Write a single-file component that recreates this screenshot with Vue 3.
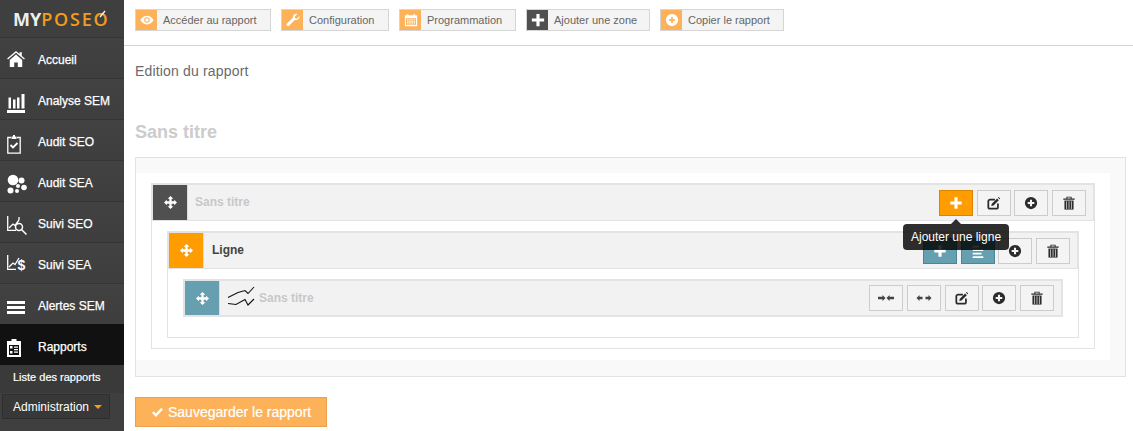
<script setup>
const move = '<path d="M8 0l3.500 3.500H9.400v3.100h3.100V4.500L16 8l-3.500 3.500V9.400H9.400v3.100h2.100L8 16l-3.500-3.500h2.100V9.400H3.500v2.100L0 8l3.500-3.500v2.100h3.100V3.500H4.500z" fill="#fff"/>'
const plus = '<path d="M6.200 1.500h3.600v4.700h4.700v3.600H9.800v4.700H6.200V9.800H1.500V6.200h4.700z" fill="currentColor"/>'
const edit = '<path d="M12.500 8.500V12.500a2 2 0 0 1-2 2H3.500a2 2 0 0 1-2-2V6a2 2 0 0 1 2-2H9" fill="none" stroke="currentColor" stroke-width="2"/><path d="M5.500 8.800l6-6 2 2-6 6-2.600.6z" fill="currentColor"/><path d="M12.500 1.800l.8-.8 1.800 1.800-.8.8z" fill="currentColor"/>'
const circlePlus = '<path fill-rule="evenodd" d="M8 1a7 7 0 1 1 0 14A7 7 0 0 1 8 1zM6.800 4.200v2.600H4.200v2.400h2.600v2.600h2.400V9.200h2.600V6.800H9.200V4.200z" fill="currentColor"/>'
const trash = '<path d="M1.500 2.800h13v1.400h-13zM5 2.800V.8h6v2H9.900V1.800H6.100v1z" fill="currentColor"/><path d="M2.800 5.200h10.400V15.500H2.800z" fill="currentColor"/><path d="M5.200 6v8.800M8 6v8.800M10.800 6v8.800" stroke="#f4f4f4" stroke-width=".8"/>'
const collapse = '<path d="M0 6.800h4.500V5L7.500 8l-3 3V9.200H0zM16 6.800h-4.500V5l-3 3 3 3V9.200H16z" fill="#444"/>'
const expand = '<path d="M6.500 6.800h-3V5L.5 8l3 3V9.200h3zM9.500 6.800h3V5l3 3-3 3V9.200h-3z" fill="#444"/>'
const lines = '<path d="M2 2h7v2H2zM2 6h12v2H2zM2 10h10v2H2zM2 14h12v2H2z" fill="currentColor"/>'

const nav = [
  { label: 'Accueil', dy: -1, vb: '0 0 20 18', w: 18, h: 16, svg: '<path d="M10 0l4 3.400V1.500h2.500v4L20 8.500l-1 1.100L10 2 1 9.600 0 8.500z M3 10l7-6 7 6v8h-5v-5H8v5H3z" fill="#fff"/>' },
  { label: 'Analyse SEM', dy: 2, vb: '0 0 18 19', w: 18, h: 19, svg: '<path d="M0 16h18v3H0zM1.500 3.500H4v11H1.500zM6 5.500h2.500v9H6zM10 3.500h2.500v11H10zM14.500 0h3v14.500h-3z" fill="#fff"/>' },
  { label: 'Audit SEO', dy: 2, vb: '0 0 14 19', w: 14, h: 19, svg: '<path d="M4 2.500H.8v15.700h12.400V2.500H10" fill="none" stroke="#fff" stroke-width="1.300"/><path d="M4.500 1.500h1.500V0h2v1.500h1.500V4h-5z" fill="#fff"/><path d="M3.500 10l2.500 2.500 4.500-4.500" fill="none" stroke="#fff" stroke-width="1.800"/>' },
  { label: 'Audit SEA', dy: 1, vb: '0 0 20 20', w: 20, h: 20, svg: '<circle cx="6" cy="6" r="5.300" fill="#fff"/><circle cx="14.500" cy="6.500" r="3" fill="#fff"/><circle cx="11" cy="12" r="2" fill="#fff"/><circle cx="17" cy="13.500" r="2.800" fill="#fff"/><circle cx="3.500" cy="16.500" r="3" fill="#fff"/><circle cx="10" cy="17" r="2" fill="#fff"/>' },
  { label: 'Suivi SEO', dy: 2, vb: '0 0 20 20', w: 20, h: 20, svg: '<path d="M.7 0v14.300H9" fill="none" stroke="#fff" stroke-width="1.300"/><path d="M2 12l4-4 2 1.500L12 4M12 4V1" fill="none" stroke="#fff" stroke-width="1.300"/><circle cx="12" cy="11" r="3.500" fill="#3f3f3f" stroke="#fff" stroke-width="1.500"/><path d="M14.500 13.500l5 5" stroke="#fff" stroke-width="1.500"/>' },
  { label: 'Suivi SEA', dy: 0, vb: '0 0 20 20', w: 20, h: 20, svg: '<path d="M.7 0v14.300H9" fill="none" stroke="#fff" stroke-width="1.300"/><path d="M2 12l4-4 2 1.500L12 3" fill="none" stroke="#fff" stroke-width="1.300"/><text x="10.500" y="15" font-size="14" font-weight="700" fill="#fff" font-family="Liberation Sans, sans-serif">$</text>' },
  { label: 'Alertes SEM', dy: 1, vb: '0 0 18 13', w: 18, h: 13, svg: '<path d="M0 0h18v3H0zM0 5h18v3H0zM0 10h18v3H0z" fill="#fff"/>' },
  { label: 'Rapports', dy: 1, vb: '0 0 14 18', w: 14, h: 18, active: true, svg: '<path fill-rule="evenodd" d="M0 2h4.500V0h5v2H14v16H0zM2 6v10h10V6z" fill="#fff"/><path d="M3 7h2.500v2.500H3zM3 12h2.500v2.500H3zM7 7.500h4v1.300H7zM7 10h4v1.300H7zM7 12.500h4v1.300H7z" fill="#fff"/>' },
]

const tools = [
  { label: 'Accéder au rapport', w: 136, svg: '<path fill-rule="evenodd" d="M8 3c4 0 7 3.500 7.500 5C15 9.500 12 13 8 13S1 9.500.5 8C1 6.500 4 3 8 3zm0 1.800a3.200 3.200 0 1 0 0 6.400 3.200 3.200 0 0 0 0-6.400z" fill="#fff"/><circle cx="8" cy="8" r="2" fill="#fff"/>' },
  { label: 'Configuration', w: 108, svg: '<path d="M15.500 3.500l-3 3-2-.5-.5-2 3-3c-2.500-1-5.500 1-5 4.200L1 12.200c-.8 1-.6 1.900 0 2.500.7.700 1.700.8 2.500 0L10 8c3.500.7 6.200-2 5.500-4.500z" fill="#fff"/>' },
  { label: 'Programmation', w: 117, svg: '<path fill-rule="evenodd" d="M1 2.500h2.500V1h1.500v1.500h6V1h1.500v1.500H15V15H1zM2.200 6v7.800h11.600V6z" fill="#fff"/><path d="M3.500 7h1.700v1.500H3.500zM6 7h1.700v1.500H6zM8.500 7h1.700v1.500H8.500zM11 7h1.700v1.500H11zM3.500 9.500h1.700V11H3.500zM6 9.500h1.700V11H6zM8.500 9.500h1.700V11H8.500zM11 9.500h1.700V11H11zM3.500 12h1.700v1.200H3.500zM6 12h1.700v1.200H6zM8.500 12h1.700v1.200H8.500zM11 12h1.700v1.200H11z" fill="#fff"/>' },
  { label: 'Ajouter une zone', w: 124, dark: true, svg: '<path d="M6.200 1h3.600v5.200H15v3.600H9.800V15H6.200V9.800H1V6.200h5.200z" fill="#fff"/>' },
  { label: 'Copier le rapport', w: 124, svg: '<path fill-rule="evenodd" d="M8 1a7 7 0 1 1 0 14A7 7 0 0 1 8 1zM7 4.500V7H4.500v2H7v2.500h2V9h2.500V7H9V4.500z" fill="#fff"/>' },
]

const zoneTools = [
  { svg: plus, cls: 'orange' }, { svg: edit }, { svg: circlePlus }, { svg: trash },
]
const lineTools = [
  { svg: plus, cls: 'teal' }, { svg: lines, cls: 'teal' }, { svg: circlePlus }, { svg: trash },
]
const blockTools = [
  { svg: collapse, s: 16 }, { svg: expand, s: 16 }, { svg: edit }, { svg: circlePlus }, { svg: trash },
]
</script>

<template>
  <div class="page">
    <aside class="side">
      <div class="logo">
        <span class="my">MY</span><span class="poseo">POSE</span><span class="o">O<svg class="needle" viewBox="0 0 8 8" width="8" height="8"><path d="M1 7l5-6" stroke="#fff" stroke-width="1.200"/></svg></span>
      </div>
      <nav>
        <a v-for="n in nav" :key="n.label" class="nav-item" :class="{ active: n.active }">
          <span class="nav-ico" :style="{ transform: `translateY(${n.dy}px)` }"><svg :viewBox="n.vb" :width="n.w" :height="n.h" v-html="n.svg"></svg></span>
          <span class="nav-label">{{ n.label }}</span>
        </a>
      </nav>
      <div class="sub">Liste des rapports</div>
      <div class="admin">Administration <i class="caret"></i></div>
    </aside>

    <main class="main">
      <header class="bar">
        <button v-for="t in tools" :key="t.label" class="tool" :style="{ width: t.w + 'px' }">
          <span class="tool-ico" :class="{ dark: t.dark }"><svg viewBox="0 0 16 16" width="14" height="14" v-html="t.svg"></svg></span>
          <span class="tool-label">{{ t.label }}</span>
        </button>
      </header>

      <div class="content">
        <p class="crumb">Edition du rapport</p>
        <h1 class="title">Sans titre</h1>

        <section class="panel">
          <div class="canvas">
            <div class="row zone">
              <div class="head">
                <span class="handle h-dark"><svg viewBox="0 0 16 16" width="13" height="13" v-html="move"></svg></span>
                <span class="name muted lift">Sans titre</span>
                <div class="acts">
                  <div class="btn-wrap" v-for="(b, i) in zoneTools" :key="i">
                    <button class="act" :class="b.cls"><svg viewBox="0 0 16 16" width="14" height="14" v-html="b.svg"></svg></button>
                    <div v-if="i === 0" class="tip">Ajouter une ligne</div>
                  </div>
                </div>
              </div>
              <div class="body">
                <div class="row line">
                  <div class="head">
                    <span class="handle h-orange"><svg viewBox="0 0 16 16" width="13" height="13" v-html="move"></svg></span>
                    <span class="name strong lift">Ligne</span>
                    <div class="acts">
                      <button v-for="(b, i) in lineTools" :key="i" class="act" :class="b.cls"><svg viewBox="0 0 16 16" width="14" height="14" v-html="b.svg"></svg></button>
                    </div>
                  </div>
                  <div class="body">
                    <div class="row block">
                      <div class="head">
                        <span class="handle h-teal"><svg viewBox="0 0 16 16" width="13" height="13" v-html="move"></svg></span>
                        <svg class="chart" viewBox="0 0 30 24" width="30" height="24"><path d="M1 11.500l10-5 7-2 3 3 6-6.500M1 17.500l8 1 9-5 3 5.500 6-6" fill="none" stroke="#111" stroke-width="1.100"/></svg>
                        <span class="name muted tight">Sans titre</span>
                        <div class="acts">
                          <button v-for="(b, i) in blockTools" :key="i" class="act"><svg viewBox="0 0 16 16" :width="b.s || 14" :height="b.s || 14" v-html="b.svg"></svg></button>
                        </div>
                      </div>
                    </div>
                  </div>
                </div>
              </div>
            </div>
          </div>
        </section>

        <button class="save">
          <svg viewBox="0 0 14 12" width="13" height="11"><path d="M1 6.500l1.800-2 2.500 2.500L11 .8 13 2.800 5.300 11z" fill="#fff"/></svg>
          Sauvegarder le rapport
        </button>
      </div>
    </main>
  </div>
</template>

<style scoped>
.page {
  display: grid;
  grid-template-columns: 124px 1fr;
  height: 431px;
  overflow: hidden;
  font-family: "Liberation Sans", Arial, sans-serif;
  background: #fff;
}
.side { background: #3f3f3f; color: #fff; display: flex; flex-direction: column; }
.logo {
  height: 37px;
  padding: 8px 0 0 13px;
  box-sizing: border-box;
  font-family: "Open Sans", sans-serif;
  font-size: 18px;
  font-weight: 600;
  line-height: 22px;
  white-space: nowrap;
}
.my { color: #eee; font-weight: 700; }
.poseo, .o { color: #f49b1c; letter-spacing: 1.800px; }
.o { position: relative; }
.needle { position: absolute; right: 3px; top: 3px; }
.nav-item {
  display: flex;
  align-items: center;
  height: 41px;
  padding-top: 4px;
  box-sizing: border-box;
  border-top: 1px solid #353535;
  background: linear-gradient(#424242, #3e3e3e);
}
.nav-item.active { background: #111; border-top-color: #111; }
.nav-ico { width: 38px; padding-left: 7px; box-sizing: border-box; display: flex; flex: none; }
.nav-label { font-size: 12px; font-weight: 400; -webkit-text-stroke: .25px #fff; }
.sub { height: 28px; line-height: 25px; padding-left: 13px; font-size: 11px; background: #3a3a3a; -webkit-text-stroke: .2px #fff; }
.admin {
  width: 108px;
  height: 25px;
  margin: 1px 0 0 2px;
  padding-left: 10px;
  box-sizing: border-box;
  line-height: 24px;
  font-size: 12px;
  background: #383838;
  border: 1px solid #2f2f2f;
}
.caret {
  display: inline-block;
  border: 4px solid transparent;
  border-top-color: #f49b1c;
  border-bottom: 0;
  margin-left: 2px;
  vertical-align: 2px;
}
.main { min-width: 0; }
.bar {
  height: 46px;
  box-sizing: border-box;
  border-bottom: 1px solid #d5d5d5;
  padding: 9px 0 0 11px;
  display: flex;
  gap: 10px;
  align-items: flex-start;
}
.tool {
  display: flex;
  align-items: center;
  height: 22px;
  padding: 0;
  background: #f4f4f4;
  border: 1px solid #d5d5d5;
  box-sizing: border-box;
  font: inherit;
  cursor: pointer;
}
.tool-ico {
  width: 21px;
  height: 20px;
  background: #fdb25a;
  display: flex;
  align-items: center;
  justify-content: center;
  flex: none;
}
.tool-ico.dark { background: #505050; }
.tool-label { margin-left: 6px; font-size: 11px; color: #666; white-space: nowrap; }
.content { padding: 0 7px 0 11px; }
.crumb { margin: 17px 0 0; font-size: 14px; line-height: 16px; color: #6a6a6a; letter-spacing: .17px; }
.title { margin: 43px 0 0; font-size: 18px; line-height: 20px; color: #ccc; font-weight: 700; }
.panel {
  margin-top: 15px;
  height: 220px;
  box-sizing: border-box;
  border: 1px solid #e3e3e3;
  background: #f9f9f9;
  padding: 15px 15px 15px 0;
}
.canvas { background: #fff; height: 187px; padding: 10px 15px 0 15px; box-sizing: border-box; }
.row { border: 2px solid #e3e3e3; border-bottom: 0; box-sizing: border-box; }
.zone { height: 166px; border-bottom: 1px solid #e3e3e3; border-width: 0 1px 1px 1px; }
.head {
  display: flex;
  align-items: center;
  height: 35px;
  background: #f2f2f2;
  box-shadow: 0 2px 0 #e3e3e3;
}
.zone > .head { margin: 0 -1px; border: 2px solid #e3e3e3; border-bottom-width: 1px; height: 38px; box-sizing: border-box; box-shadow: none; }
.zone > .body { height: 127px; padding: 10px 15px 0; box-sizing: border-box; }
.line { height: 107px; border-width: 0 1px 1px; border-style: solid; border-color: #e3e3e3; }
.line > .head { margin: 0 -1px; border: 2px solid #e3e3e3; border-bottom-width: 1px; height: 38px; box-sizing: border-box; box-shadow: none; }
.line > .body { padding: 10px 15px 0; }
.block { border-width: 0; }
.block > .head { border: 2px solid #e3e3e3; height: 38px; box-sizing: border-box; box-shadow: none; }
.handle {
  width: 34px;
  height: 100%;
  flex: none;
  display: flex;
  align-items: center;
  justify-content: center;
  border-right: 1px solid #ddd;
}
.h-dark { background: #505050; }
.h-orange { background: #ff9c00; }
.h-teal { background: #669fb0; }
.name { margin-left: 7px; font-size: 12px; font-weight: 700; }
.lift { margin-bottom: 2px; }
.muted { color: #c8c8c8; }
.strong { color: #444; margin-left: 8px; }
.tight { margin-left: 2px; }
.chart { margin-left: 7px; flex: none; }
.acts { margin-left: auto; margin-right: 7px; display: flex; gap: 3.67px; }
.btn-wrap { position: relative; display: flex; }
.act {
  width: 34px;
  height: 26px;
  padding: 0;
  display: flex;
  align-items: center;
  justify-content: center;
  background: #f4f4f4;
  border: 1px solid #ccc;
  box-sizing: border-box;
  color: #2b2b2b;
}
.act.orange { background: #ff9c00; border-color: #d98500; color: #fff; }
.act.teal { background: #669fb0; border-color: #4f8395; color: #fff; }
.tip {
  position: absolute;
  z-index: 5;
  left: -36px;
  top: 34px;
  width: 106px;
  height: 26px;
  border-radius: 4px;
  background: rgba(0, 0, 0, .82);
  color: #fff;
  font-size: 12px;
  line-height: 26px;
  text-align: center;
  white-space: nowrap;
}
.tip::before {
  content: "";
  position: absolute;
  left: 48px;
  top: -5px;
  border: 5px solid transparent;
  border-top: 0;
  border-bottom-color: rgba(0, 0, 0, .82);
}
.save {
  margin-top: 20px;
  width: 192px;
  height: 30px;
  background: #fdb25a;
  border: 1px solid #e8a04f;
  color: #fff;
  font: inherit;
  font-size: 14px;
  padding: 0 0 0 15px;
  display: flex;
  align-items: center;
  gap: 4px;
  box-sizing: border-box;
  -webkit-text-stroke: .2px #fff;
}
</style>
